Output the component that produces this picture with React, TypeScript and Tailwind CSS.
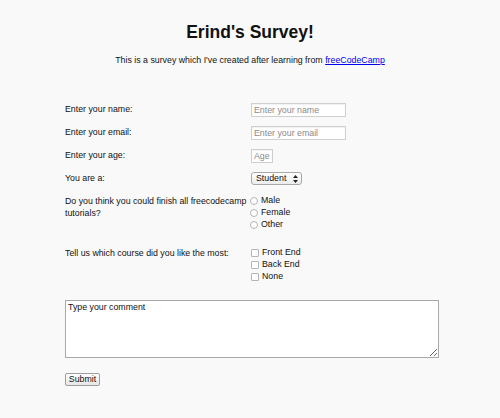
import React from 'react';

const font = "font-['Liberation_Sans',Arial,Helvetica,sans-serif]";

function TextRow({ label, placeholder, width }: { label: string; placeholder: string; width: string }) {
  return (
    <div className="flex h-[14px] items-center">
      <label className="w-[186px]">{label}</label>
      <input
        type="text"
        placeholder={placeholder}
        className={`h-[14px] ${width} border border-[#cfcfcf] bg-white px-[2px] text-[8.8px] leading-none shadow-[inset_0_1px_1px_rgba(0,0,0,0.06)] outline-none placeholder:text-[#8a8a8a] ${font}`}
      />
    </div>
  );
}

export default function App() {
  return (
    <div className={`min-h-screen bg-[#f9f9f9] text-[8.8px] text-[#111] ${font}`}>
      <h1 className="pt-[22px] text-center text-[17.5px] font-bold leading-[20px]">Erind's Survey!</h1>
      <p className="mt-[13px] text-center leading-[10px]">
        This is a survey which I've created after learning from{' '}
        <a href="#" className="text-[#0000ee] underline">
          freeCodeCamp
        </a>
      </p>

      <form className="ml-[65px] mt-[38px] flex w-[374px] flex-col gap-[9px]">
        <TextRow label="Enter your name:" placeholder="Enter your name" width="w-[95px]" />
        <TextRow label="Enter your email:" placeholder="Enter your email" width="w-[95px]" />
        <TextRow label="Enter your age:" placeholder="Age" width="w-[22px]" />

        <div className="flex h-[14px] items-center">
          <label className="w-[186px]">You are a:</label>
          <div className="relative">
            <select
              defaultValue="student"
              className={`h-[13px] w-[51px] appearance-none rounded-[3px] border border-[#a8a8a8] bg-gradient-to-b from-white to-[#ececec] pl-[4px] text-[8.8px] leading-none text-[#111] outline-none ${font}`}
            >
              <option value="student">Student</option>
              <option value="job">Job</option>
              <option value="other">Other</option>
            </select>
            <svg className="pointer-events-none absolute right-[4px] top-[3px]" width="5" height="8" viewBox="0 0 5 8">
              <path d="M2.5 0 L5 3 L0 3 Z" fill="#222" />
              <path d="M2.5 8 L5 5 L0 5 Z" fill="#222" />
            </svg>
          </div>
        </div>

        <div className="flex items-start">
          <label className="w-[186px] pr-[4px] leading-[12px]">Do you think you could finish all freecodecamp tutorials?</label>
          <div className="flex flex-col">
            {['Male', 'Female', 'Other'].map((v, i) => (
              <label key={v} className="-ml-[1px] flex h-[12px] items-center gap-[2px]">
                <input
                  type="radio"
                  name="finish"
                  defaultChecked={false}
                  className="h-[8px] w-[8px] appearance-none rounded-full border border-[#b5b5b5] bg-white"
                  data-i={i}
                />
                <span className="ml-[1px]">{v}</span>
              </label>
            ))}
          </div>
        </div>

        <div className="mt-[7px] flex items-start">
          <label className="w-[186px] leading-[12px]">Tell us which course did you like the most:</label>
          <div className="flex flex-col">
            {['Front End', 'Back End', 'None'].map((v) => (
              <label key={v} className="flex h-[12px] items-center gap-[2px]">
                <input
                  type="checkbox"
                  className="h-[8px] w-[8px] appearance-none rounded-[1px] border border-[#b5b5b5] bg-white"
                />
                <span className="ml-[1px]">{v}</span>
              </label>
            ))}
          </div>
        </div>

        <textarea
          defaultValue="Type your comment"
          className={`mt-[8px] h-[58px] w-full border border-[#a9a9a9] bg-white px-[2px] py-[1px] text-[8.8px] leading-[10px] text-[#111] outline-none ${font}`}
        />

        <div className="mt-[6px]">
          <button
            type="button"
            className={`h-[13px] w-[35px] rounded-[2px] border border-[#9d9d9d] bg-gradient-to-b from-white to-[#e6e6e6] text-[8.8px] leading-none text-[#111] ${font}`}
          >
            Submit
          </button>
        </div>
      </form>
    </div>
  );
}
